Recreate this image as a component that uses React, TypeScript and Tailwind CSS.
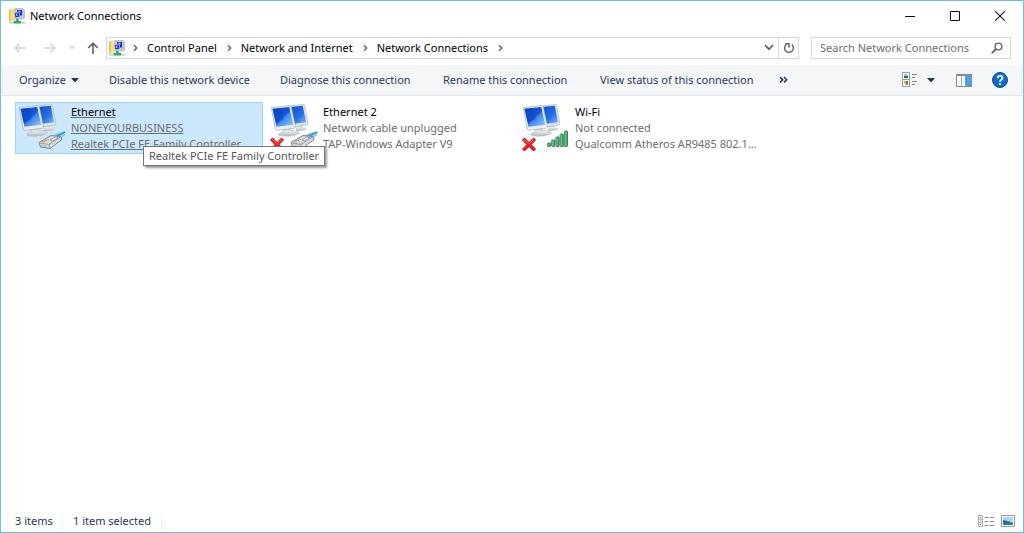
import React from 'react';

function ConnectionsIcon() {
  return (
    <svg width="16" height="16" viewBox="0 0 16 16" className="shrink-0" aria-hidden="true">
      <path d="M0 1.500 6 .5v12L0 13.500z" fill="#f6df7c" />
      <path d="M0 1.500 1.500 1v12L0 13.500z" fill="#e0c04a" />
      <path d="M6 .5h8l1.500 1.500v8L14 11H6z" fill="#c3c8ce" stroke="#a6abb2" strokeWidth=".6" />
      <path d="M8 2h5v5.500H8z" fill="#1a24cc" />
      <path d="M5.500 4.500 10 4l1 5-5 .8z" fill="#1a24cc" stroke="#dfe4ec" strokeWidth=".7" />
      <path d="M9.500 2.500h2v2h-2zM7 5.500h1.500V8H7z" fill="#8fb4ff" />
      <path d="M7 11h2.500v2H12v2.500H4.500V13H7z" fill="#17b26a" />
      <path d="M0 14h4.500v1.500H0zM12 14h4v1.500h-4z" fill="#c3c8cc" />
    </svg>
  );
}

function Crumb({ children }: { children: React.ReactNode }) {
  return (
    <>
      <a href="#" className="pr-0.5 whitespace-nowrap">{children}</a>
      <Chevron />
    </>
  );
}

function Chevron() {
  return (
    <svg width="6" height="8" viewBox="0 0 6 8" className="mx-2 shrink-0" aria-hidden="true">
      <path d="m1 1.200 2.800 2.800L1 6.800" fill="none" stroke="#5c5c5c" strokeWidth="1.300" />
    </svg>
  );
}

function Triangle() {
  return (
    <svg width="8" height="5" viewBox="0 0 8 5" aria-hidden="true">
      <path d="M0 0h8L4 4.500z" fill="#1e395b" />
    </svg>
  );
}

type Kind = 'plug' | 'unplugged' | 'wifi';

function AdapterIcon({ kind }: { kind: Kind }) {
  const screen = `screen-${kind}`;
  const back = `back-${kind}`;
  const stand = `stand-${kind}`;
  const bars = `bars-${kind}`;
  return (
    <svg width="48" height="48" viewBox="0 0 48 48" className="shrink-0" aria-hidden="true">
      <defs>
        <linearGradient id={screen} x1="0" y1="0" x2="1" y2="1">
          <stop offset="0" stopColor="#0a48c8" />
          <stop offset=".5" stopColor="#1557d8" />
          <stop offset=".56" stopColor="#3f88f0" />
          <stop offset="1" stopColor="#9accff" />
        </linearGradient>
        <linearGradient id={back} x1="0" y1="0" x2="1" y2="1">
          <stop offset="0" stopColor="#0a48c8" />
          <stop offset=".6" stopColor="#246fe4" />
          <stop offset="1" stopColor="#7fb8fa" />
        </linearGradient>
        <linearGradient id={stand} x1="0" y1="0" x2="0" y2="1">
          <stop offset="0" stopColor="#a9aeb3" />
          <stop offset=".5" stopColor="#e6e9eb" />
          <stop offset="1" stopColor="#b3b8bd" />
        </linearGradient>
        <linearGradient id={bars} x1="0" y1="0" x2="1" y2="0">
          <stop offset="0" stopColor="#8fd3a4" />
          <stop offset="1" stopColor="#3a9a5b" />
        </linearGradient>
      </defs>
      <path d="m26 22 6-1 1 3.500 4 .8-1.500 2-9.500 1z" fill={`url(#${stand})`} />
      <path d="m16.500 3.200 17-1.700 1 .8 3.500 18.700-1 1-15 2z" fill="#e1e5e8" stroke="#a9afb5" strokeWidth=".6" />
      <path d="m17.500 4.200 15.300-1.500 3.200 16.500-14 1.800z" fill={`url(#${back})`} />
      <path d="m12 24.500 7-1 2 4 7 .8 1.500 1.700c-3 2.800-15 4-20 2.600l-1-1.800 5-2.200z" fill={`url(#${stand})`} stroke="#a9afb5" strokeWidth=".5" />
      <path d="m1.200 4.500 18.800-1.900 1.200.8 4.300 20.600-1 1.300-18 2-1.200-.8z" fill="#eceff1" stroke="#9ea4aa" strokeWidth=".6" />
      <path d="m2.500 5.700 16.800-1.600 4 17.700-16.800 2z" fill={`url(#${screen})`} />
      <path d="m2.500 5.700 8-.8 3.500 12-8.700 2.200z" fill="#0640b4" fillOpacity=".35" />
      {kind !== 'wifi' && (
        <g>
          <path d="m33 34 6-4 8.500-1.500v3.500L42 36z" fill="#8dd0ea" />
          <path d="m38 33.500 9-4.500" stroke="#349abd" strokeWidth="1.500" />
          <path d="m21 39.500 12-7 9.500 1 1.500 3-12 9-9.500-1.500z" fill="#d9dddf" stroke="#737b82" strokeWidth=".9" />
          <path d="m22 40 9 1.500 12-8M31 41.500l.8 3.800" fill="none" stroke="#868d93" strokeWidth=".8" />
          <path d="m24 38.500 3 .5m-1-1.800 3 .5m-1-1.800 3 .5" stroke="#c29b3c" strokeWidth=".9" />
          <path d="m32 37 5-3 3 .5-5 3.500z" fill="#f9fafa" stroke="#7a8288" strokeWidth=".7" />
          <path d="m24 42v1.500m2-1.200v1.500m2-1.200v1.500" stroke="#868e94" strokeWidth=".8" />
        </g>
      )}
      {kind === 'wifi' && (
        <g fill={`url(#${bars})`} stroke="#24804a" strokeWidth=".9">
          <rect x="25.500" y="40" width="3.200" height="3.500" rx=".7" />
          <rect x="29.700" y="37" width="3.200" height="6.500" rx=".7" />
          <rect x="33.900" y="34" width="3.200" height="9.500" rx=".7" />
          <rect x="38.100" y="31" width="3.200" height="12.500" rx=".7" />
          <rect x="42.300" y="28" width="3.200" height="15.500" rx=".7" />
        </g>
      )}
      {kind !== 'plug' && (
        <g fill="none" strokeLinecap="square">
          <path d="m2.500 37 9 9m0-9-9 9" stroke="#b80d0d" strokeWidth="3.600" />
          <path d="m2.500 37 9 9m0-9-9 9" stroke="#ec2424" strokeWidth="2.400" />
          <path d="m2.500 36.500 3.500 3.500m5.500-3.500L8 40" stroke="#ff8a80" strokeWidth=".8" />
        </g>
      )}
    </svg>
  );
}

interface Adapter {
  name: string;
  status: string;
  device: string;
  kind: Kind;
}

const adapters: Adapter[] = [
  { name: 'Ethernet', status: 'NONEYOURBUSINESS', device: 'Realtek PCIe FE Family Controller', kind: 'plug' },
  { name: 'Ethernet 2', status: 'Network cable unplugged', device: 'TAP-Windows Adapter V9', kind: 'unplugged' },
  { name: 'Wi-Fi', status: 'Not connected', device: 'Qualcomm Atheros AR9485 802.1...', kind: 'wifi' },
];

function AdapterTile({ adapter, selected }: { adapter: Adapter; selected: boolean }) {
  return (
    <li className="relative">
      <button
        type="button"
        aria-pressed={selected}
        className={
          selected
            ? 'flex w-[248px] border border-[#99d1ff] bg-[#cce8ff] pl-0.5 text-left text-[#6d6d6d] underline'
            : 'flex w-[248px] border border-transparent pl-0.5 text-left text-[#6d6d6d]'
        }
      >
        <AdapterIcon kind={adapter.kind} />
        <span className="flex flex-col pt-px pb-px pl-[5px] leading-4 whitespace-nowrap">
          <span className="text-black">{adapter.name}</span>
          <span className="decoration-[#6d6d6d]">{adapter.status}</span>
          <span>{adapter.device}</span>
        </span>
      </button>
      {selected && (
        <span
          role="tooltip"
          className="absolute top-[44px] left-[128px] z-10 border border-[#767676] bg-white px-[5px] leading-[18px] whitespace-nowrap text-[#575757] shadow-[2px_2px_2px_rgba(0,0,0,0.4)]"
        >
          {adapter.device}
        </span>
      )}
    </li>
  );
}

export default function App() {
  return (
    <div className="flex min-h-screen flex-col border border-[#6fbdea] bg-white font-['Noto_Sans','Open_Sans',sans-serif] text-[11px] leading-4 text-black">
      <header className="flex h-[29px] items-center pr-px pl-2">
        <ConnectionsIcon />
        <h1 className="ml-[5px] flex-1">Network Connections</h1>
        <button type="button" aria-label="Minimize" className="flex h-full w-[45px] items-center justify-center">
          <svg width="10" height="10" viewBox="0 0 10 10"><path d="M0 5.500h10" stroke="#111" /></svg>
        </button>
        <button type="button" aria-label="Maximize" className="flex h-full w-[45px] items-center justify-center">
          <svg width="10" height="10" viewBox="0 0 10 10"><path d="M.5.500h9v9h-9z" fill="none" stroke="#111" /></svg>
        </button>
        <button type="button" aria-label="Close" className="flex h-full w-[45px] items-center justify-center">
          <svg width="10" height="10" viewBox="0 0 10 10"><path d="m0 0 10 10M10 0 0 10" stroke="#111" strokeWidth="1.100" /></svg>
        </button>
      </header>

      <nav className="flex h-[35px] items-center pr-3" aria-label="Address">
        <button type="button" aria-label="Back" className="ml-[11px] flex w-4 justify-center">
          <svg width="12" height="10" viewBox="0 0 12 10"><path d="M12 5H1M5.500.700 1.200 5l4.300 4.300" fill="none" stroke="#d2d2d2" strokeWidth="1.400" /></svg>
        </button>
        <button type="button" aria-label="Forward" className="ml-[14px] flex w-4 justify-center">
          <svg width="12" height="10" viewBox="0 0 12 10"><path d="M0 5h11M6.500.700 10.800 5 6.500 9.300" fill="none" stroke="#d2d2d2" strokeWidth="1.400" /></svg>
        </button>
        <button type="button" aria-label="Recent locations" className="ml-2 flex w-3 justify-center">
          <svg width="6" height="5" viewBox="0 0 6 5"><path d="m.5.800 2.500 2.500L5.500.800" fill="none" stroke="#cfcfcf" strokeWidth="1.200" /></svg>
        </button>
        <button type="button" aria-label="Up" className="ml-[9px] flex w-3 justify-center">
          <svg width="12" height="12" viewBox="0 0 12 12"><path d="M6 12V1.500M1.200 6 6 1.200 10.800 6" fill="none" stroke="#666" strokeWidth="1.700" /></svg>
        </button>

        <div className="ml-[7px] flex h-[22px] min-w-0 flex-1 items-center border border-[#d9d9d9] pl-0.5">
          <ConnectionsIcon />
          <Chevron />
          <Crumb>Control Panel</Crumb>
          <Crumb>Network and Internet</Crumb>
          <Crumb>Network Connections</Crumb>
          <span className="flex-1" />
          <button type="button" aria-label="Previous locations" className="flex h-full w-[19px] items-center justify-center">
            <svg width="10" height="7" viewBox="0 0 10 7"><path d="m1 1.200 4 4 4-4" fill="none" stroke="#666" strokeWidth="1.700" /></svg>
          </button>
          <button type="button" aria-label="Refresh" className="flex h-full w-5 items-center justify-center border-l border-[#d9d9d9]">
            <svg width="12" height="12" viewBox="0 0 12 12">
              <path d="M3.300 2.500A4.400 4.400 0 1 0 8.800 2.600" fill="none" stroke="#666" strokeWidth="1.400" />
              <path d="M2 1.700h4v4" fill="none" stroke="#666" strokeWidth="1.400" />
            </svg>
          </button>
        </div>

        <label className="ml-3 flex h-[22px] w-[200px] items-center border border-[#d9d9d9] pr-[7px] pl-2">
          <input
            type="search"
            aria-label="Search Network Connections"
            placeholder="Search Network Connections"
            className="min-w-0 flex-1 bg-transparent outline-none placeholder:text-[#6d6d6d]"
          />
          <svg width="12" height="12" viewBox="0 0 12 12" className="shrink-0" aria-hidden="true">
            <circle cx="7.500" cy="4.500" r="3.400" fill="none" stroke="#666" strokeWidth="1.400" />
            <path d="M5 7 .8 11.200" stroke="#666" strokeWidth="1.800" />
          </svg>
        </label>
      </nav>

      <div role="toolbar" aria-label="Commands" className="flex h-[31px] items-center border-b border-[#e3e6ea] bg-[#f5f6f7] pr-[15px] pl-[18px] whitespace-nowrap text-[#1e395b]">
        <button type="button" className="flex w-[90px] items-center gap-[5px]">
          Organize
          <Triangle />
        </button>
        <button type="button" className="w-[171px] text-left">Disable this network device</button>
        <button type="button" className="w-[163px] text-left">Diagnose this connection</button>
        <button type="button" className="w-[157px] text-left">Rename this connection</button>
        <button type="button" className="w-[179px] text-left">View status of this connection</button>
        <button type="button" aria-label="More commands">
          <svg width="9" height="8" viewBox="0 0 9 8"><path d="m1 1 2.700 2.700L1 6.400M5 1l2.700 2.700L5 6.400" fill="none" stroke="#1e395b" strokeWidth="1.500" /></svg>
        </button>
        <span className="flex-1" />
        <button type="button" aria-label="Change your view">
          <svg width="16" height="16" viewBox="0 0 16 16">
            <path d="M.5.500h7v7h-7zM.5 7.500h7v7h-7z" fill="#fff" stroke="#9a9a9a" />
            <path d="M2 2h4v2H2z" fill="#8cc8f0" /><path d="M2 4h4v2H2z" fill="#1f5fae" />
            <path d="M2 9h2v2H2z" fill="#e4a52e" /><path d="M3.500 10.500H6V13H3.500z" fill="#4c9c42" /><path d="M4 9h2v2H4z" fill="#d65442" />
            <path d="M10 2.500h5M10 5.500h3M10 9.500h5M10 12.500h3" stroke="#858585" />
          </svg>
        </button>
        <button type="button" aria-label="More options" className="ml-[9px] flex"><Triangle /></button>
        <button type="button" aria-label="Show the preview pane" className="ml-[21px]">
          <svg width="16" height="13" viewBox="0 0 16 13">
            <path d="M.5.500h15v12H.500z" fill="#fff" stroke="#8a8a8a" />
            <path d="M0 0h16v2H0z" fill="#8a8a8a" /><path d="M5.500 2v10" stroke="#a9a9a9" />
            <path d="M9 2h6v10H9z" fill="#45a3ee" />
          </svg>
        </button>
        <button type="button" aria-label="Get help" className="ml-5">
          <svg width="16" height="16" viewBox="0 0 16 16">
            <circle cx="8" cy="8" r="7.500" fill="#0c6cc9" stroke="#0a4c94" />
            <path d="M5.600 6.200c0-3.300 4.900-3.200 4.900-.3C10.500 7.700 8 7.800 8 9.800" fill="none" stroke="#fff" strokeWidth="1.700" />
            <circle cx="8" cy="12" r="1.100" fill="#fff" />
          </svg>
        </button>
      </div>

      <main className="flex-1 px-[14px] pt-[6px]">
        <ul className="flex flex-wrap gap-1">
          {adapters.map((adapter, index) => (
            <AdapterTile key={adapter.name} adapter={adapter} selected={index === 0} />
          ))}
        </ul>
      </main>

      <footer className="flex h-[23px] items-center pr-2 pl-[14px] text-[#1e395b]">
        <span className="w-12 border-r border-[#f2f2f2]">3 items</span>
        <span className="ml-[10px] border-r border-[#f2f2f2] pr-[10px]">1 item selected</span>
        <span className="flex-1" />
        <button type="button" aria-label="Details view">
          <svg width="16" height="12" viewBox="0 0 16 12">
            <path d="M.5.500h4v11h-4zM.5 4.200h4M.5 7.800h4" fill="#fff" stroke="#aaa" />
            <path d="M2 2h1v1H2zM2 5.500h1v1H2z" fill="#3c82c4" /><path d="M2 9h1v1H2z" fill="#cf4c3f" />
            <path d="M6.500 2.500H10m1.500 0H16M6.500 6.500H10m1.500 0H16M6.500 10.500H10m1.500 0H16" stroke="#8b8b8b" />
          </svg>
        </button>
        <button type="button" aria-label="Large icons view" className="ml-[7px]">
          <svg width="14" height="12" viewBox="0 0 14 12">
            <path d="M.5.500h13v11H.500z" fill="#fff" stroke="#999" />
            <path d="M2 2h10v8H2z" fill="#a9d8f7" /><path d="M2 5q5 1 10 3v2H2z" fill="#236bb0" /><path d="M2 8.500q5-1 10 0V10H2z" fill="#328868" />
          </svg>
        </button>
      </footer>
    </div>
  );
}
